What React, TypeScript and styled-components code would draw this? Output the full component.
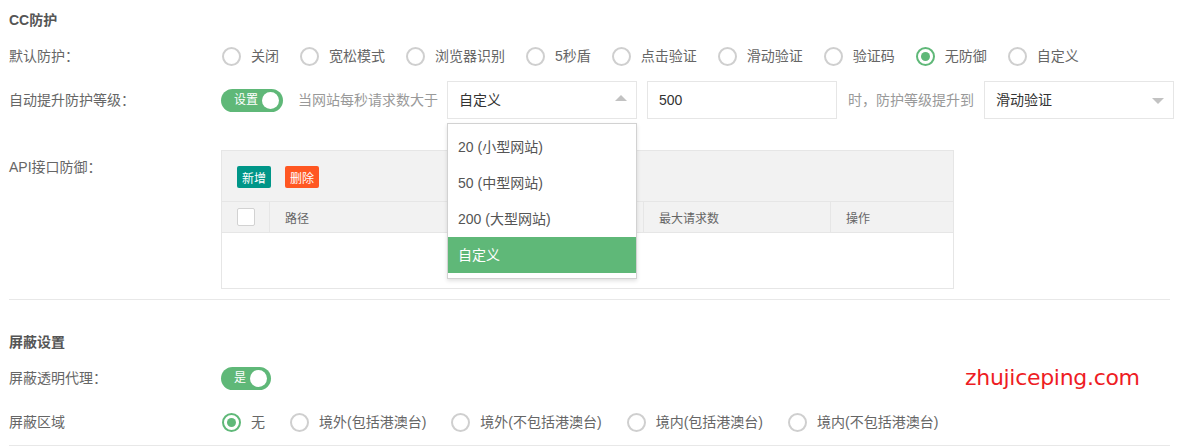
import React from 'react'
import styled, { createGlobalStyle } from 'styled-components'

const GREEN = '#5fb878'

const GlobalStyle = createGlobalStyle`
  html, body {
    margin: 0;
    padding: 0;
    background: #fff;
  }
  body {
    font-family: "Liberation Sans", "Noto Sans CJK SC", sans-serif;
    font-size: 14px;
    color: #666;
  }
  * {
    box-sizing: border-box;
  }
`

const Page = styled.div`
  position: relative;
  width: 1179px;
  height: 448px;
  overflow: hidden;
  padding: 10px 9px 0;
`

const Section = styled.div<{ $top?: number }>`
  display: flex;
  flex-direction: column;
  gap: 6px;
  margin-top: ${(p) => p.$top ?? 0}px;
`

const SectionTitle = styled.div`
  font-weight: bold;
  color: #555;
  line-height: 20px;
  margin-bottom: 1px;
`

const FormRow = styled.div`
  display: flex;
  align-items: center;
  min-height: 38px;

  & > * {
    flex-shrink: 0;
  }
`

const ApiRow = styled(FormRow)`
  align-items: flex-start;
  margin-top: 25px;
`

const Label = styled.div<{ $padTop?: number }>`
  width: 212px;
  line-height: 20px;
  color: #666;
  padding-top: ${(p) => p.$padTop ?? 0}px;
`

const Divider = styled.div<{ $top: number }>`
  height: 1px;
  background: #e8e8e8;
  margin-top: ${(p) => p.$top}px;
`

const RadioGroup = styled.div<{ $spacing: number }>`
  display: flex;
  align-items: center;
  padding-left: 1px;
  gap: ${(p) => p.$spacing}px;
`

const RadioItem = styled.label`
  display: inline-flex;
  align-items: center;
  gap: 10px;
  line-height: 20px;
  color: #666;
  white-space: nowrap;
`

const RadioCircle = styled.span<{ $checked?: boolean }>`
  width: 19px;
  height: 19px;
  border-radius: 50%;
  border: 2px solid ${(p) => (p.$checked ? GREEN : '#cfcfcf')};
  display: inline-flex;
  align-items: center;
  justify-content: center;

  &::after {
    content: '';
    display: ${(p) => (p.$checked ? 'block' : 'none')};
    width: 9px;
    height: 9px;
    border-radius: 50%;
    background: ${GREEN};
  }
`

const Switch = styled.div`
  display: inline-flex;
  align-items: center;
  position: relative;
  height: 23px;
  padding: 0 25px 0 13px;
  border-radius: 20px;
  background: ${GREEN};
  color: #fff;
  font-size: 12px;
  line-height: 23px;
  white-space: nowrap;

  &::after {
    content: '';
    position: absolute;
    right: 4px;
    top: 3px;
    width: 17px;
    height: 17px;
    border-radius: 50%;
    background: #fff;
  }
`

const Hint = styled.span<{ $left: number; $right: number }>`
  color: #999;
  line-height: 20px;
  margin: 0 ${(p) => p.$right}px 0 ${(p) => p.$left}px;
  white-space: nowrap;
`

const SelectBox = styled.div`
  position: relative;
  width: 190px;
  height: 38px;
  border: 1px solid #e6e6e6;
  padding-left: 11px;
  line-height: 36px;
  color: #333;
  background: #fff;
`

const Arrow = styled.span<{ $up?: boolean }>`
  position: absolute;
  right: 9px;
  top: 50%;
  margin-top: ${(p) => (p.$up ? -5 : -2)}px;
  width: 0;
  height: 0;
  border-left: 6px solid transparent;
  border-right: 6px solid transparent;
  ${(p) =>
    p.$up
      ? 'border-bottom: 6px solid #c2c2c2;'
      : 'border-top: 6px solid #c2c2c2;'}
`

const TextInput = styled.div`
  width: 190px;
  height: 38px;
  border: 1px solid #e6e6e6;
  padding-left: 11px;
  line-height: 36px;
  color: #333;
  margin-left: 10px;
`

const DropList = styled.div`
  position: absolute;
  top: 41px;
  left: -1px;
  width: 190px;
  padding: 5px 0;
  background: #fff;
  border: 1px solid #d2d2d2;
  box-shadow: 0 2px 4px rgba(0, 0, 0, 0.12);
  z-index: 10;
`

const DropItem = styled.div<{ $active?: boolean }>`
  height: 36px;
  line-height: 36px;
  padding: 0 10px;
  color: ${(p) => (p.$active ? '#fff' : '#555')};
  background: ${(p) => (p.$active ? GREEN : 'transparent')};
  white-space: nowrap;
`

const Panel = styled.div`
  width: 733px;
  border: 1px solid #e6e6e6;
  background: #fff;
`

const Toolbar = styled.div`
  height: 50px;
  background: #f2f2f2;
  display: flex;
  align-items: center;
  gap: 14px;
  padding: 2px 0 0 15px;
`

const SmallButton = styled.span<{ $bg: string }>`
  display: inline-flex;
  align-items: center;
  justify-content: center;
  height: 22px;
  padding: 0 5px;
  border-radius: 2px;
  background: ${(p) => p.$bg};
  color: #fff;
  font-size: 12px;
`

const HeaderRow = styled.div`
  display: grid;
  grid-template-columns: 48px 374px 187px 1fr;
  height: 32px;
  background: #f2f2f2;
  border-top: 1px solid #e6e6e6;
  border-bottom: 1px solid #e6e6e6;
`

const HeaderCell = styled.div<{ $center?: boolean }>`
  display: flex;
  align-items: center;
  justify-content: ${(p) => (p.$center ? 'center' : 'flex-start')};
  padding-left: ${(p) => (p.$center ? 0 : 15)}px;
  font-size: 12px;
  color: #666;
  border-right: 1px solid #e6e6e6;

  &:last-child {
    border-right: none;
  }
`

const Checkbox = styled.span`
  width: 18px;
  height: 18px;
  border: 1px solid #d2d2d2;
  border-radius: 2px;
  background: #fff;
`

const TableBody = styled.div`
  height: 55px;
`

const Watermark = styled.div`
  position: absolute;
  left: 965px;
  top: 366px;
  font-family: "DejaVu Sans", sans-serif;
  font-size: 22px;
  line-height: 24px;
  color: #ee1c24;
  letter-spacing: -0.3px;
`

const defaultModes = [
  '关闭',
  '宽松模式',
  '浏览器识别',
  '5秒盾',
  '点击验证',
  '滑动验证',
  '验证码',
  '无防御',
  '自定义'
]

const regions = [
  '无',
  '境外(包括港澳台)',
  '境外(不包括港澳台)',
  '境内(包括港澳台)',
  '境内(不包括港澳台)'
]

const levels = ['20 (小型网站)', '50 (中型网站)', '200 (大型网站)', '自定义']

const Radios = ({
  options,
  checked,
  spacing
}: {
  options: string[]
  checked: string
  spacing: number
}) => (
  <RadioGroup $spacing={spacing}>
    {options.map((o) => (
      <RadioItem key={o}>
        <RadioCircle $checked={o === checked} />
        {o}
      </RadioItem>
    ))}
  </RadioGroup>
)

export default function App() {
  return (
    <>
      <GlobalStyle />
      <Page>
        <Section>
          <SectionTitle>CC防护</SectionTitle>
          <FormRow>
            <Label>默认防护：</Label>
            <Radios options={defaultModes} checked='无防御' spacing={21} />
          </FormRow>
          <FormRow>
            <Label>自动提升防护等级：</Label>
            <Switch>设置</Switch>
            <Hint $left={15} $right={9}>
              当网站每秒请求数大于
            </Hint>
            <SelectBox>
              自定义
              <Arrow $up />
              <DropList>
                {levels.map((l) => (
                  <DropItem key={l} $active={l === '自定义'}>
                    {l}
                  </DropItem>
                ))}
              </DropList>
            </SelectBox>
            <TextInput>500</TextInput>
            <Hint $left={11} $right={10}>
              时，防护等级提升到
            </Hint>
            <SelectBox>
              滑动验证
              <Arrow />
            </SelectBox>
          </FormRow>
          <ApiRow>
            <Label $padTop={7}>API接口防御：</Label>
            <Panel>
              <Toolbar>
                <SmallButton $bg='#009688'>新增</SmallButton>
                <SmallButton $bg='#ff5722'>删除</SmallButton>
              </Toolbar>
              <HeaderRow>
                <HeaderCell $center>
                  <Checkbox />
                </HeaderCell>
                <HeaderCell>路径</HeaderCell>
                <HeaderCell>最大请求数</HeaderCell>
                <HeaderCell>操作</HeaderCell>
              </HeaderRow>
              <TableBody />
            </Panel>
          </ApiRow>
        </Section>
        <Divider $top={10} />
        <Section $top={32}>
          <SectionTitle>屏蔽设置</SectionTitle>
          <FormRow>
            <Label>屏蔽透明代理：</Label>
            <Switch>是</Switch>
          </FormRow>
          <FormRow>
            <Label>屏蔽区域</Label>
            <Radios options={regions} checked='无' spacing={25} />
          </FormRow>
        </Section>
        <Divider $top={4} />
        <Watermark>zhujiceping.com</Watermark>
      </Page>
    </>
  )
}
